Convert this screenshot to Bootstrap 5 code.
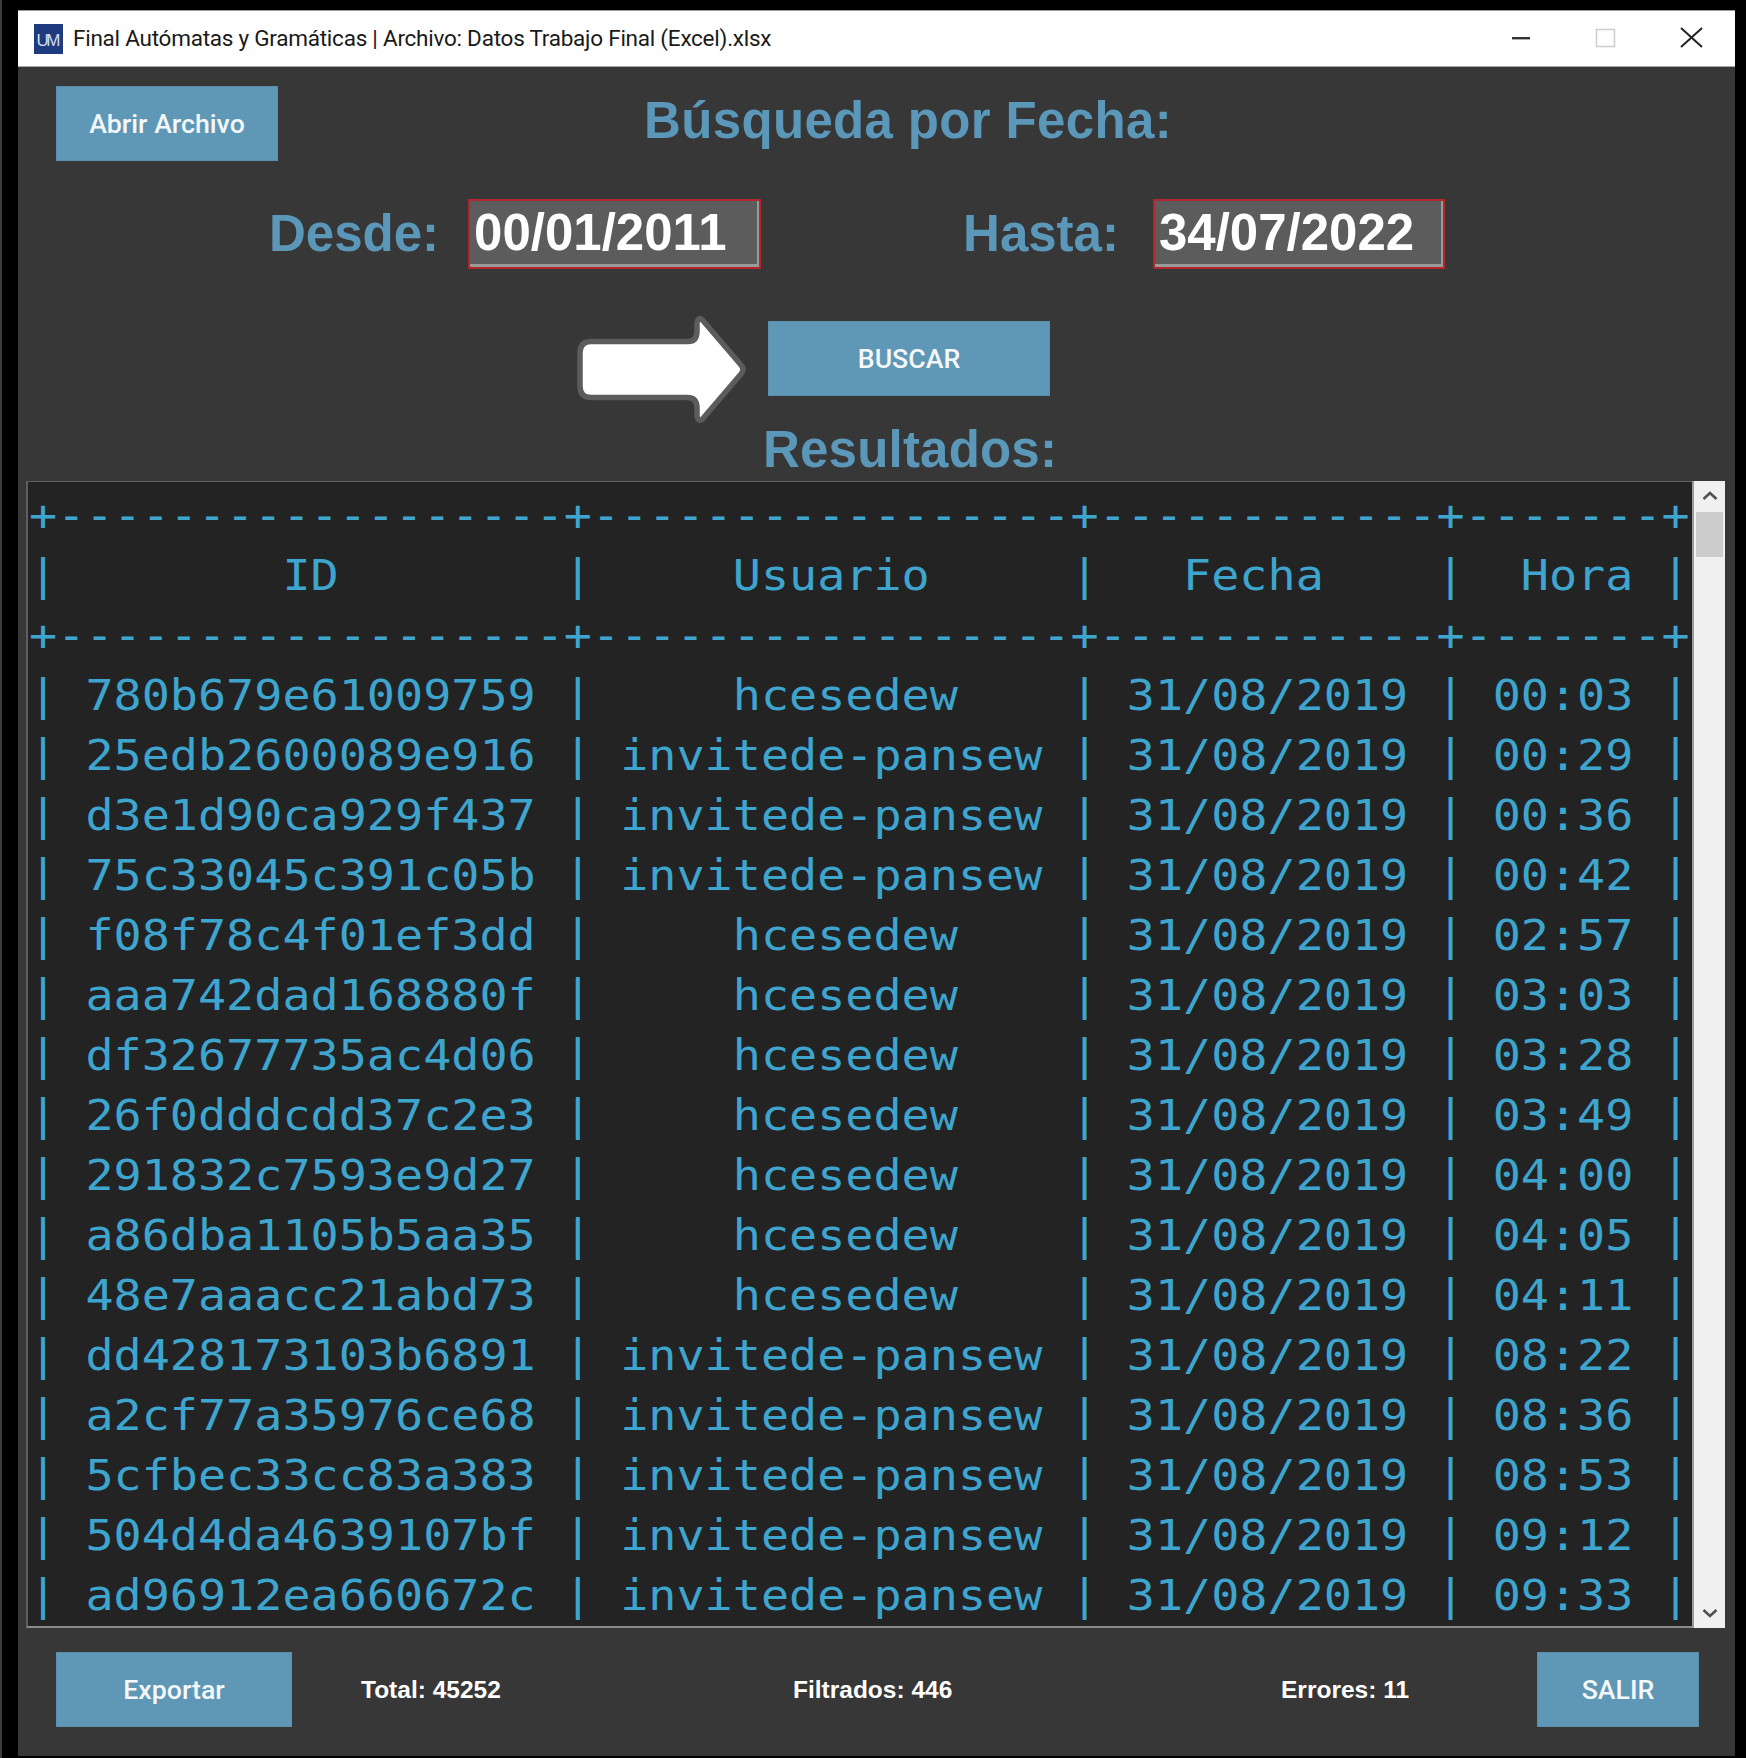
<!DOCTYPE html>
<html lang="es">
<head>
<meta charset="utf-8">
<title>Final Autómatas y Gramáticas</title>
<link rel="stylesheet" href="https://cdn.jsdelivr.net/npm/bootstrap@5.3.0/dist/css/bootstrap.min.css">
<style>
html,body{height:100%}
body{background:#000;margin:0;font-family:"Liberation Sans",Arial,sans-serif;color:#fff;overflow:hidden}
.shell{width:1746px;height:1758px;padding:10px 10px 2px 16px;border-left:2px solid #3c3c3c}
.win{height:1746px;width:1717px;background:#373737;overflow:hidden}
.titlebar{height:57px;background:#fff;border-top:1px solid #9a9a9a;border-bottom:1px solid #a8a8a8;padding-left:16px;color:#1a1a1a}
.titlebar .ttl{font-family:Roboto,sans-serif;font-size:22.5px;margin-left:10px;white-space:nowrap;letter-spacing:-.24px}
.wctl{margin-left:auto;margin-right:-1px;display:flex;align-items:center}
.btn-um{background:#5f97b7;color:#f4f8fa;border:1px solid #5a90ae;border-radius:0;font-family:Roboto,sans-serif;font-weight:500;font-size:26.7px;height:75px;display:flex;align-items:center;justify-content:center;padding:1px 0 0}
.btn-um:hover{background:#5f97b7;color:#f4f8fa}
.btn-open{width:222px;margin-left:38px}
.btn-find{width:282px;margin-left:22px}
.btn-exp{width:236px;margin-left:38px}
.btn-exit{width:162px}
.hd{color:#5b97b8;font-weight:700;font-size:51px;line-height:58px;margin:0}
.row-top{padding-top:19px;height:132px}
.row-top .hd{margin-left:366px;margin-top:6px;letter-spacing:.35px}
.row-dates{height:70px;padding-left:251px}
.date-in{height:70px;background:#5c5c5c;border:2px solid #b3262c;border-radius:0;color:#fff;font-weight:700;font-size:51px;line-height:64px;padding:0 0 0 4px;box-shadow:inset -2px -3px 0 #9a9a9a}
.date-a{width:293px;flex:0 0 293px;margin-left:29px}
.date-b{width:292px;flex:0 0 292px;margin-left:34px}
.gap-h{margin-left:202px}
.row-go{height:107px;margin-top:47px;padding-left:559px}
.row-go .btn-um{margin-top:5px}
.row-res{height:61px;margin-top:-2px;padding-left:745px}
.row-res .hd{letter-spacing:.2px}
.tbox{width:1699px;height:1147px;margin-left:8px;margin-top:-1px}
.term{background:#232323;border-top:1px solid #5f5f5f;border-left:2px solid #5f5f5f;border-bottom:2px solid #8a8a8a;overflow:hidden}
.term pre{margin:0;padding:3.5px 0 0 1px;font-family:"DejaVu Sans Mono",monospace;font-size:42.5px;line-height:60.05px;color:#3ea5cf;transform:scaleX(1.1);transform-origin:0 0;overflow:visible;white-space:pre}
.sbar{width:33px;flex:0 0 33px;background:#f0f0f0;border-left:2px solid #9a9a9a;padding:0 2px}
.sbar .thumb{height:45px;background:#cdcdcd;margin-top:1px}
.sbar .arw{height:30px}
.row-foot{height:75px;margin-top:24px;font-weight:700;font-size:24.5px;color:#fff}
.stat{white-space:nowrap;padding-top:2px}
.s1{margin-left:69px;width:432px}
.s2{width:488px}
.s3{width:256px}
</style>
</head>
<body>
<div class="shell">
<div class="win d-flex flex-column">
  <div class="titlebar d-flex align-items-center">
    <svg width="29" height="30" viewBox="0 0 29 30"><rect width="29" height="30" fill="#1f3b80"/><text x="14.5" y="22" text-anchor="middle" font-family="Liberation Sans" font-size="17" fill="#d5dcec" textLength="24">UM</text></svg>
    <span class="ttl">Final Autómatas y Gramáticas | Archivo: Datos Trabajo Final (Excel).xlsx</span>
    <div class="wctl">
      <svg width="240" height="30" viewBox="0 0 240 30">
        <rect x="16" y="13" width="18" height="2.4" fill="#333"/>
        <rect x="100.5" y="5.5" width="18" height="17" fill="none" stroke="#cfcfcf" stroke-width="1.6"/>
        <path d="M185 4L206 23M206 4L185 23" stroke="#222" stroke-width="2" fill="none"/>
      </svg>
    </div>
  </div>
  <div class="row-top d-flex align-items-start">
    <button class="btn btn-um btn-open" type="button">Abrir Archivo</button>
    <h1 class="hd">Búsqueda por Fecha:</h1>
  </div>
  <div class="row-dates d-flex align-items-center">
    <span class="hd">Desde:</span>
    <div class="form-control date-in date-a">00/01/2011</div>
    <span class="hd gap-h">Hasta:</span>
    <div class="form-control date-in date-b">34/07/2022</div>
  </div>
  <div class="row-go d-flex align-items-start">
    <svg width="169" height="107" viewBox="0 0 169 107"><path d="M14 25.5H111Q120 25.5 120 15V7Q121 1 125 3.5L164 49Q168 53 164 58L125 103.5Q121 106 120 100V92Q120 81.5 110 81.5H14Q3 81.5 3 70V37Q3 25.5 14 25.5Z" fill="#fff" stroke="#5c5c5c" stroke-width="5.5" stroke-linejoin="round"/></svg>
    <button class="btn btn-um btn-find" type="button">BUSCAR</button>
  </div>
  <div class="row-res"><h2 class="hd">Resultados:</h2></div>
  <div class="tbox d-flex">
    <div class="term flex-grow-1"><pre>+------------------+-----------------+------------+-------+
|        ID        |     Usuario     |   Fecha    |  Hora |
+------------------+-----------------+------------+-------+
| 780b679e61009759 |     hcesedew    | 31/08/2019 | 00:03 |
| 25edb2600089e916 | invitede-pansew | 31/08/2019 | 00:29 |
| d3e1d90ca929f437 | invitede-pansew | 31/08/2019 | 00:36 |
| 75c33045c391c05b | invitede-pansew | 31/08/2019 | 00:42 |
| f08f78c4f01ef3dd |     hcesedew    | 31/08/2019 | 02:57 |
| aaa742dad168880f |     hcesedew    | 31/08/2019 | 03:03 |
| df32677735ac4d06 |     hcesedew    | 31/08/2019 | 03:28 |
| 26f0dddcdd37c2e3 |     hcesedew    | 31/08/2019 | 03:49 |
| 291832c7593e9d27 |     hcesedew    | 31/08/2019 | 04:00 |
| a86dba1105b5aa35 |     hcesedew    | 31/08/2019 | 04:05 |
| 48e7aaacc21abd73 |     hcesedew    | 31/08/2019 | 04:11 |
| dd428173103b6891 | invitede-pansew | 31/08/2019 | 08:22 |
| a2cf77a35976ce68 | invitede-pansew | 31/08/2019 | 08:36 |
| 5cfbec33cc83a383 | invitede-pansew | 31/08/2019 | 08:53 |
| 504d4da4639107bf | invitede-pansew | 31/08/2019 | 09:12 |
| ad96912ea660672c | invitede-pansew | 31/08/2019 | 09:33 |</pre></div>
    <div class="sbar d-flex flex-column">
      <div class="arw d-flex align-items-center justify-content-center"><svg width="16" height="10" viewBox="0 0 16 10"><path d="M1.5 8L8 2L14.5 8" fill="none" stroke="#505050" stroke-width="2.6"/></svg></div>
      <div class="thumb"></div>
      <div class="arw d-flex align-items-center justify-content-center mt-auto"><svg width="16" height="10" viewBox="0 0 16 10"><path d="M1.5 2L8 8L14.5 2" fill="none" stroke="#505050" stroke-width="2.6"/></svg></div>
    </div>
  </div>
  <div class="row-foot d-flex align-items-center">
    <button class="btn btn-um btn-exp" type="button">Exportar</button>
    <span class="stat s1">Total: 45252</span>
    <span class="stat s2">Filtrados: 446</span>
    <span class="stat s3">Errores: 11</span>
    <button class="btn btn-um btn-exit" type="button">SALIR</button>
  </div>
</div>
</div>
</body>
</html>
